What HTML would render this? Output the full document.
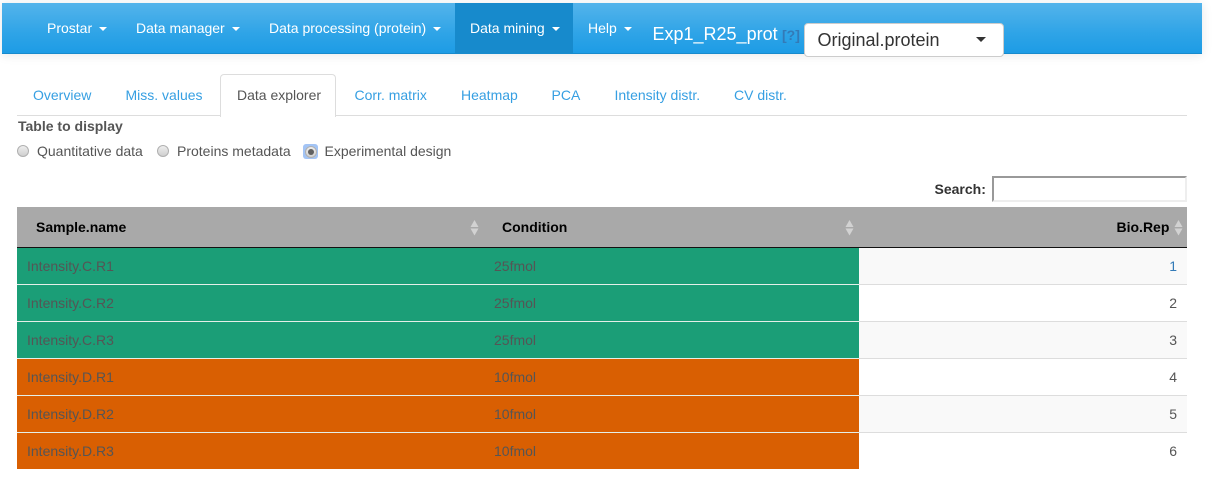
<!DOCTYPE html>
<html><head><meta charset="utf-8">
<style>
html,body{margin:0;padding:0;background:#fff;}
body{width:1212px;height:501px;position:relative;overflow:hidden;font-family:"Liberation Sans",Arial,sans-serif;font-size:14px;color:#555;}
.a{position:absolute;white-space:nowrap;}
#nav{position:absolute;left:2px;top:3px;width:1200px;height:50px;background:linear-gradient(#54b4eb,#2fa4e7 60%,#1d9ce5);border-bottom:1px solid #178acc;box-shadow:0 1px 10px rgba(0,0,0,.1);}
.n{position:absolute;top:20px;color:#fff;line-height:16px;white-space:nowrap;}
.c{display:inline-block;width:0;height:0;border-top:4px solid;border-left:4px solid transparent;border-right:4px solid transparent;vertical-align:middle;margin-left:3px;}
.t{position:absolute;top:87px;line-height:16px;color:#369fe2;white-space:nowrap;}
.r{position:absolute;left:17px;width:1170px;height:36px;border-bottom:1px solid #ddd;background:#fff;}
.r.o{background:#f9f9f9;}
.b{position:absolute;left:0;top:0;width:842px;height:36px;border-bottom:1px solid #e4efe9;}
.g{background:#1b9e77;}.d{background:#d95f02;}
.s1,.s2,.s3{position:absolute;top:10px;line-height:16px;color:#555;white-space:nowrap;}
.s1{left:10px}.s2{left:477px}.s3{right:10px;}
.th{position:absolute;top:219px;font-weight:bold;color:#000;line-height:16px;white-space:nowrap;}
.radio{position:absolute;top:145px;width:10px;height:10px;border-radius:50%;border:1px solid #b0b0b0;background:linear-gradient(#eee,#cfcfcf);}
</style></head><body>
<div id="nav"></div>
<div class="a" style="left:455px;top:3px;width:118px;height:50px;background:#178acc;"></div>
<div class="n" style="left:47px">Prostar <span class="c"></span></div>
<div class="n" style="left:136px">Data manager <span class="c"></span></div>
<div class="n" style="left:269px">Data processing (protein) <span class="c"></span></div>
<div class="n" style="left:470px">Data mining <span class="c"></span></div>
<div class="n" style="left:588px">Help <span class="c"></span></div>
<div class="a" style="left:652.500px;top:24px;font-size:18px;line-height:21px;color:#fff;">Exp1_R25_prot</div>
<div class="a" style="left:782px;top:27px;font-size:14px;font-weight:bold;line-height:16px;color:#337ab7;">[?]</div>
<div class="a" style="left:804px;top:23px;width:198px;height:32px;background:#fff;border:1px solid #ccc;border-radius:4px;"></div>
<div class="a" style="left:817.500px;top:30px;font-size:18px;line-height:20px;color:#333;">Original.protein</div>
<div class="a" style="left:976px;top:37px;width:0;height:0;border-top:5px solid #333;border-left:5px solid transparent;border-right:5px solid transparent;"></div>

<div class="a" style="left:17px;top:115px;width:1170px;height:1px;background:#ddd;"></div>
<div class="a" style="left:220px;top:74px;width:114px;height:42px;background:#fff;border:1px solid #ddd;border-bottom:none;border-radius:4px 4px 0 0;"></div>
<div class="t" style="left:33px">Overview</div>
<div class="t" style="left:125.500px">Miss. values</div>
<div class="t" style="left:237px;color:#555">Data explorer</div>
<div class="t" style="left:354.500px">Corr. matrix</div>
<div class="t" style="left:461px">Heatmap</div>
<div class="t" style="left:551.500px">PCA</div>
<div class="t" style="left:614.500px">Intensity distr.</div>
<div class="t" style="left:734px">CV distr.</div>

<div class="a" style="left:18px;top:118px;font-weight:bold;line-height:16px;">Table to display</div>
<div class="radio" style="left:17px"></div>
<div class="a" style="left:37px;top:143px;line-height:16px;">Quantitative data</div>
<div class="radio" style="left:157px"></div>
<div class="a" style="left:177px;top:143px;line-height:16px;">Proteins metadata</div>
<div class="a" style="left:303px;top:144px;width:15px;height:15px;background:#a3c4f5;border-radius:3px;"></div>
<div class="radio" style="left:304.500px;top:145.500px;"></div>
<div class="a" style="left:307.500px;top:148.500px;width:6px;height:6px;border-radius:50%;background:#606060;"></div>
<div class="a" style="left:324.500px;top:143px;line-height:16px;">Experimental design</div>

<div class="a" style="left:934.500px;top:181px;font-weight:bold;line-height:16px;color:#333;">Search:</div>
<div class="a" style="left:992px;top:176px;width:191px;height:22px;border:2px solid;border-color:#999 #eee #eee #999;background:#fff;"></div>

<div class="a" style="left:17px;top:207px;width:1170px;height:40px;background:#a9a9a9;border-bottom:1px solid #111;"></div>
<div class="th" style="left:36px">Sample.name</div>
<div class="th" style="left:502px">Condition</div>
<div class="th" style="left:1116.500px">Bio.Rep</div>
<svg class="a" style="left:470px;top:220px" width="10" height="16"><path d="M4.500 0L8.500 7H0.500Z M0.500 8.500H8.500L4.500 15.500Z" fill="#d2d2d2"/></svg>
<svg class="a" style="left:845px;top:220px" width="10" height="16"><path d="M4.500 0L8.500 7H0.500Z M0.500 8.500H8.500L4.500 15.500Z" fill="#d2d2d2"/></svg>
<svg class="a" style="left:1173.500px;top:220px" width="10" height="16"><path d="M4.500 0L8.500 7H0.500Z M0.500 8.500H8.500L4.500 15.500Z" fill="#d2d2d2"/></svg>

<div class="r o" style="top:248px"><div class="b g"></div><span class="s1">Intensity.C.R1</span><span class="s2">25fmol</span><span class="s3" style="color:#337ab7">1</span></div>
<div class="r" style="top:285px"><div class="b g"></div><span class="s1">Intensity.C.R2</span><span class="s2">25fmol</span><span class="s3">2</span></div>
<div class="r o" style="top:322px"><div class="b g"></div><span class="s1">Intensity.C.R3</span><span class="s2">25fmol</span><span class="s3">3</span></div>
<div class="r" style="top:359px"><div class="b d"></div><span class="s1">Intensity.D.R1</span><span class="s2">10fmol</span><span class="s3">4</span></div>
<div class="r o" style="top:396px"><div class="b d"></div><span class="s1">Intensity.D.R2</span><span class="s2">10fmol</span><span class="s3">5</span></div>
<div class="r" style="top:433px;border-bottom:none"><div class="b d" style="border-bottom:none"></div><span class="s1">Intensity.D.R3</span><span class="s2">10fmol</span><span class="s3">6</span></div>
</body></html>
